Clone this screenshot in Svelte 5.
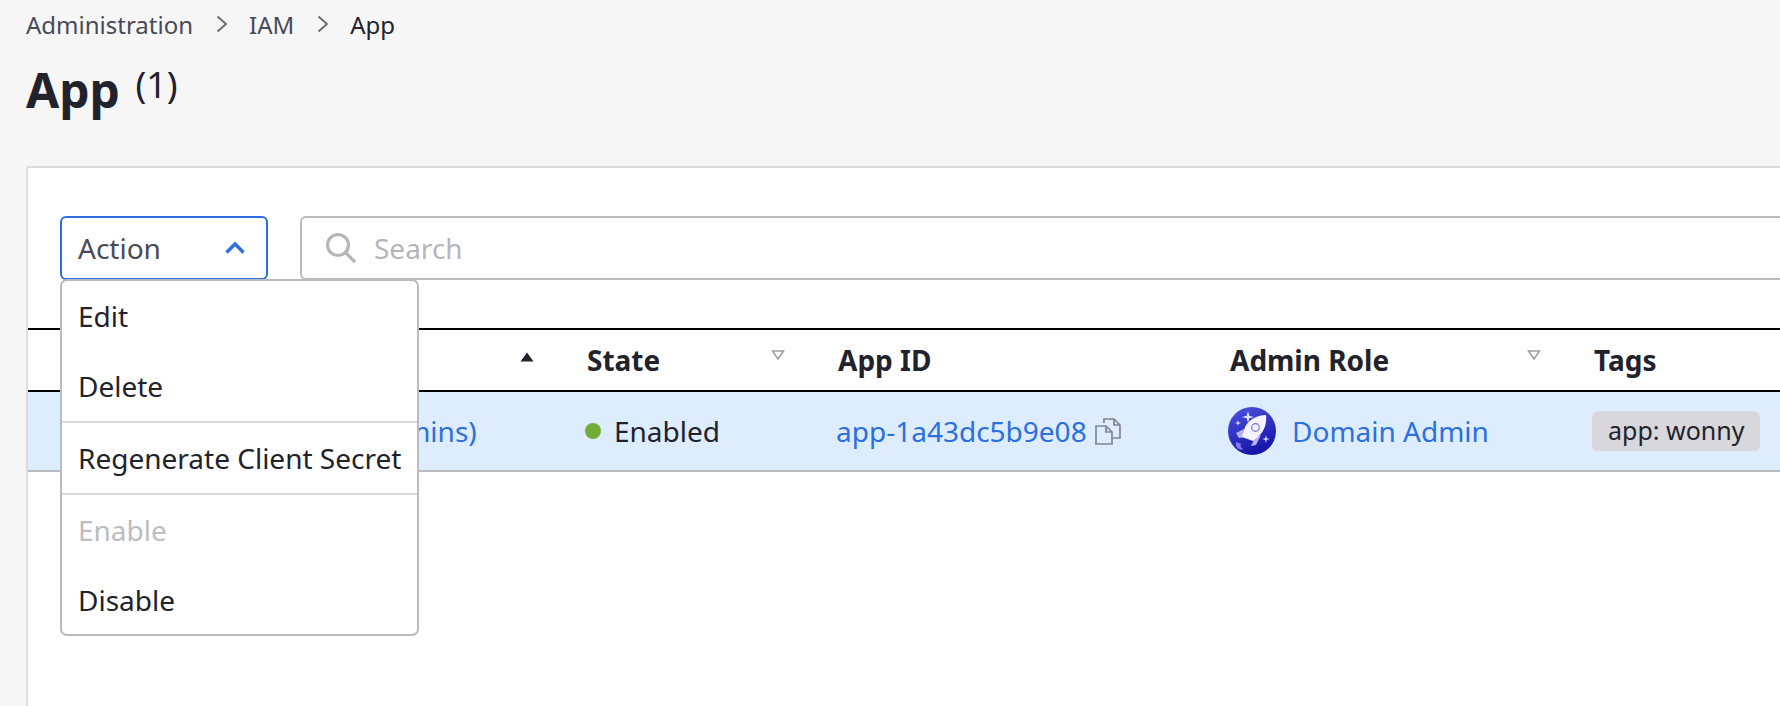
<script>
  const columns = [
    { label: 'Name', sort: 'asc' },
    { label: 'State', sort: 'none' },
    { label: 'App ID' },
    { label: 'Admin Role', sort: 'none' },
    { label: 'Tags' }
  ];
  const actions = [
    { label: 'Edit' },
    { label: 'Delete' },
    { label: 'Regenerate Client Secret', divider: true },
    { label: 'Enable', disabled: true, divider: true },
    { label: 'Disable' }
  ];
</script>

<div class="page">
  <nav class="breadcrumb">
    <span>Administration</span>
    <svg class="sep" viewBox="0 0 14 20"><path d="M2.5 2.5 L11 10 L2.5 17.5" /></svg>
    <span>IAM</span>
    <svg class="sep" viewBox="0 0 14 20"><path d="M2.5 2.5 L11 10 L2.5 17.5" /></svg>
    <span class="current">App</span>
  </nav>

  <h1>App <small>(1)</small></h1>

  <section class="card">
    <div class="toolbar">
      <div class="action">
        <span>Action</span>
        <svg viewBox="0 0 22 14"><path d="M2.5 11.5 L11 3 L19.5 11.5" /></svg>
        <ul class="menu">
          {#each actions as item}
            <li class:divider={item.divider} class:disabled={item.disabled}>{item.label}</li>
          {/each}
        </ul>
      </div>
      <div class="search">
        <svg viewBox="0 0 34 34"><circle cx="14" cy="14" r="10.5" /><path d="M21.5 21.5 L31 31" /></svg>
        <span>Search</span>
      </div>
    </div>

    <div class="table">
      <div class="row head">
        {#each columns as col}
          <div class="cell">
            <span>{col.label}</span>
            {#if col.sort === 'asc'}
              <svg class="sort" viewBox="0 0 14 10"><path class="up" d="M7 0.5 L13.5 9.5 L0.5 9.5 Z" /></svg>
            {:else if col.sort === 'none'}
              <svg class="sort" viewBox="0 0 14 10"><path class="down" d="M1.5 1 L12.5 1 L7 9 Z" /></svg>
            {/if}
          </div>
        {/each}
      </div>
      <div class="row body">
        <div class="cell"><a href="#name">Wonny (Domain Admins)</a></div>
        <div class="cell"><i class="dot"></i>Enabled</div>
        <div class="cell">
          <a href="#id">app-1a43dc5b9e08</a>
          <svg class="copy" viewBox="0 0 28 28">
            <path d="M10 6 V2 H20 L26 8 V21 H19" />
            <path d="M20 2 V8 H26" />
            <path d="M2 9 H12 L18 15 V27 H2 Z" />
            <path d="M12 9 V15 H18" />
          </svg>
        </div>
        <div class="cell">
          <svg class="avatar" viewBox="0 0 48 48">
            <defs>
              <linearGradient id="sky" x1="0.2" y1="0" x2="0.6" y2="1">
                <stop offset="0" stop-color="#4a50dc" />
                <stop offset="1" stop-color="#1412a8" />
              </linearGradient>
            </defs>
            <circle cx="24" cy="24" r="24" fill="url(#sky)" />
            <path d="M16 22 L8 26 L11 31 L18 30 Z" fill="#b7b0f5" />
            <path d="M27 31 L23 39 L28 38 L33 28 Z" fill="#b7b0f5" />
            <path d="M38 8 C30 8 21 12 17 20 L14 30 L25 34 L31 29 C36 24 39 17 38 8 Z" fill="#f4f3ff" />
            <circle cx="27.5" cy="20.5" r="3.8" fill="none" stroke="#6f70dc" stroke-width="1.2" />
            <path d="M8 35 C7 40 11 44 15 42 C13 41 12 39 13 37 Z" fill="#8a78ee" />
            <path d="M20 4 L21.3 8.7 L26 10 L21.3 11.3 L20 16 L18.7 11.3 L14 10 L18.7 8.7 Z" fill="#dfe0ff" />
            <path d="M10 13 L10.7 15.3 L13 16 L10.7 16.7 L10 19 L9.3 16.7 L7 16 L9.3 15.3 Z" fill="#dfe0ff" />
            <path d="M38 28 L38.8 31.2 L42 32 L38.8 32.8 L38 36 L37.2 32.8 L34 32 L37.2 31.2 Z" fill="#dfe0ff" />
          </svg>
          <a href="#role">Domain Admin</a>
        </div>
        <div class="cell"><span class="tag">app: wonny</span></div>
      </div>
    </div>
  </section>
</div>

<style>
  :global(body) {
    margin: 0;
    background: #f6f6f6;
  }

  .page {
    width: 1780px;
    height: 706px;
    overflow: hidden;
    box-sizing: border-box;
    padding: 0 0 0 26px;
    background: #f6f6f6;
    color: #21222c;
    font-family: "Noto Sans", sans-serif;
    font-size: 28px;
  }

  .breadcrumb {
    display: flex;
    align-items: center;
    height: 48px;
    font-size: 24px;
    color: #494a57;
  }

  .breadcrumb .current {
    color: #21222c;
  }

  .sep {
    width: 14px;
    height: 20px;
    margin: 0 20px 0 22px;
    fill: none;
    stroke: #6b6c78;
    stroke-width: 2;
  }

  h1 {
    margin: 0;
    height: 68px;
    line-height: 74px;
    font-size: 48px;
    font-weight: 700;
  }

  h1 small {
    margin-left: 3px;
    font-size: 36px;
    font-weight: 400;
    vertical-align: 10px;
  }

  .card {
    box-sizing: border-box;
    width: 1900px;
    height: 600px;
    margin-top: 50px;
    padding-top: 48px;
    background: #fff;
    border: 2px solid #dcdce0;
    border-radius: 3px 0 0 0;
  }

  .toolbar {
    display: flex;
    gap: 33px;
    height: 112px;
    padding-left: 32px;
    box-sizing: border-box;
  }

  .action {
    position: relative;
    display: flex;
    align-items: center;
    justify-content: space-between;
    box-sizing: border-box;
    width: 208px;
    height: 64px;
    padding: 0 20px 0 16px;
    border: 2px solid #2c6fe0;
    border-radius: 6px;
    color: #494a57;
  }

  .action svg {
    width: 22px;
    height: 14px;
    fill: none;
    stroke: #2c6fe0;
    stroke-width: 3.4;
  }

  .menu {
    position: absolute;
    z-index: 2;
    top: 61px;
    left: -2px;
    box-sizing: border-box;
    width: 359px;
    height: 357px;
    margin: 0;
    padding: 0;
    list-style: none;
    background: #fff;
    border: 2px solid #babac0;
    border-radius: 7px;
    color: #21222c;
  }

  .menu li {
    box-sizing: border-box;
    height: 70px;
    padding-left: 16px;
    line-height: 70px;
    white-space: nowrap;
  }

  .menu li.divider {
    height: 72px;
    border-top: 2px solid #d8d8dc;
  }

  .menu li.disabled {
    color: #bcbcc2;
  }

  .search {
    flex: 1;
    display: flex;
    align-items: center;
    gap: 16px;
    box-sizing: border-box;
    height: 64px;
    margin-left: -1px;
    padding-left: 22px;
    border: 2px solid #babac0;
    border-radius: 6px;
    color: #b5b5bb;
  }

  .search svg {
    width: 34px;
    height: 34px;
    fill: none;
    stroke: #b5b5bb;
    stroke-width: 3.2;
  }

  .row {
    display: grid;
    grid-template-columns: 559px 251px 392px 364px 1fr;
    align-items: center;
  }

  .head {
    box-sizing: border-box;
    height: 64px;
    border-top: 2px solid #000;
    border-bottom: 2px solid #000;
    font-weight: 700;
  }

  .body {
    box-sizing: border-box;
    height: 80px;
    background: #deedfe;
    border-bottom: 2px solid #babac0;
  }

  .cell {
    display: flex;
    align-items: center;
    position: relative;
    box-sizing: border-box;
  }

  .sort {
    position: absolute;
    top: 9px;
    width: 14px;
    height: 10px;
  }

  .up {
    fill: #21222c;
  }

  .down {
    fill: none;
    stroke: #9d9da5;
    stroke-width: 1.6;
  }

  .head .cell:nth-child(1) .sort {
    left: 492px;
    top: 11px;
  }

  .head .cell:nth-child(2) .sort {
    left: 184px;
  }

  .head .cell:nth-child(4) .sort {
    left: 297px;
  }

  .head .cell:nth-child(1) {
    padding-left: 120px;
  }

  a {
    color: #2c6fe0;
    text-decoration: none;
  }

  .body .cell:nth-child(1) {
    padding-left: 123px;
  }

  .dot {
    width: 16px;
    height: 16px;
    margin: 0 13px 0 -2px;
    border-radius: 50%;
    background: #73ad39;
  }

  .body .cell:nth-child(3) {
    margin-left: -2px;
  }

  .copy {
    width: 28px;
    height: 28px;
    margin-left: 7px;
    fill: none;
    stroke: #85858e;
    stroke-width: 1.7;
  }

  .avatar {
    width: 48px;
    height: 48px;
    margin: 0 16px 0 -2px;
  }

  .tag {
    box-sizing: border-box;
    height: 40px;
    margin-left: -2px;
    padding: 0 16px;
    line-height: 38px;
    background: #d8d8dc;
    border-radius: 6px;
    font-size: 25px;
  }
</style>
